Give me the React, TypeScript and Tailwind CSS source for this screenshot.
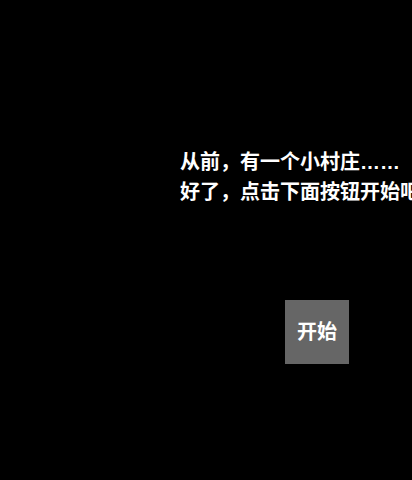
export default function App() {
  return (
    <div
      className="w-[412px] h-[480px] bg-black overflow-hidden flex flex-col"
      style={{ fontFamily: '"Liberation Sans", "Noto Sans CJK SC", sans-serif' }}
    >
      <div className="pt-[147px] pl-[180px] text-white font-bold text-[20px] leading-[30px] whitespace-nowrap">
        <p>从前，有一个小村庄……</p>
        <p>好了，点击下面按钮开始吧</p>
      </div>
      <div className="pl-[285px] pt-[93px]">
        <button className="w-[64px] h-[64px] bg-[#666666] text-white font-bold text-[20px] leading-none flex items-center justify-center">
          开始
        </button>
      </div>
    </div>
  );
}
